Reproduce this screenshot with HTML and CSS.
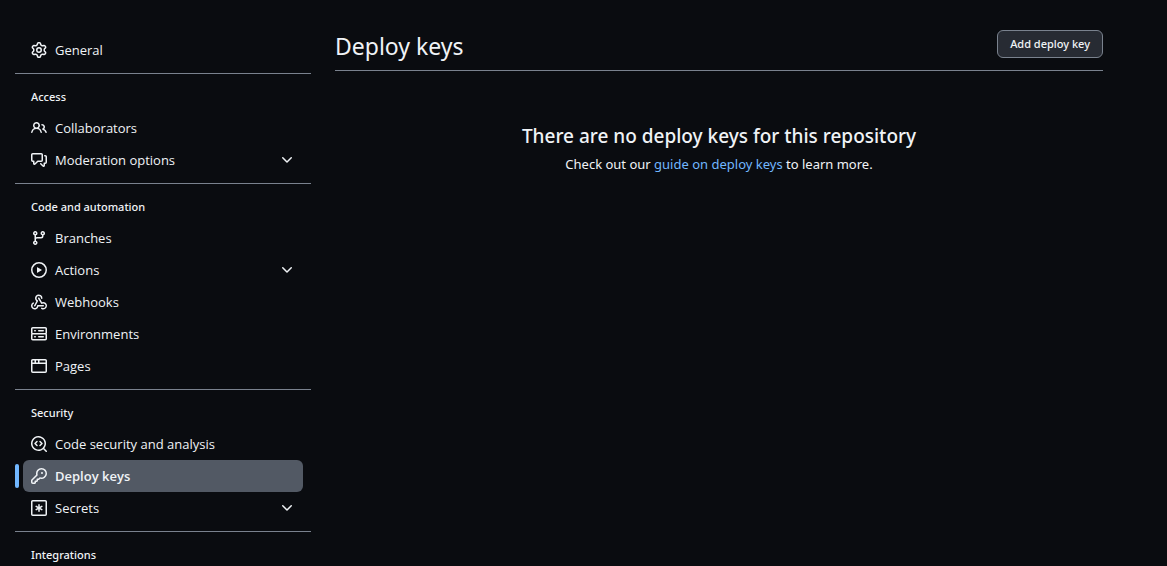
FILE: index.html
```html
<!DOCTYPE html>
<html lang="en">
<head>
    <meta charset="UTF-8">
    <meta name="viewport" content="width=device-width, initial-scale=1.0">
    <title>Deploy keys</title>
    <link rel="stylesheet" href="styles.css">
</head>
<body>

    <div class="layout">
        <nav class="sidebar" aria-label="Settings">
            <ul class="nav-group">
                <li>
                    <a class="nav-item" href="#general">
                        <svg class="icon" viewBox="0 0 16 16"><path d="M8 0a8.2 8.2 0 0 1 .701.031C9.444.095 9.99.645 10.16 1.29l.288 1.107c.018.066.079.158.212.224.231.114.454.243.668.386.123.082.233.09.299.071l1.103-.303c.644-.176 1.392.021 1.82.63.27.385.506.792.704 1.218.315.675.111 1.422-.364 1.891l-.814.806c-.049.048-.098.147-.088.294.016.257.016.515 0 .772-.01.147.038.246.088.294l.814.806c.475.469.679 1.216.364 1.891a7.977 7.977 0 0 1-.704 1.217c-.428.61-1.176.807-1.82.63l-1.102-.302c-.067-.019-.177-.011-.3.071a5.909 5.909 0 0 1-.668.386c-.133.066-.194.158-.211.224l-.29 1.106c-.168.646-.715 1.196-1.458 1.26a8.006 8.006 0 0 1-1.402 0c-.743-.064-1.289-.614-1.458-1.26l-.289-1.106c-.018-.066-.079-.158-.212-.224a5.738 5.738 0 0 1-.668-.386c-.123-.082-.233-.09-.299-.071l-1.103.303c-.644.176-1.392-.021-1.82-.63a8.12 8.12 0 0 1-.704-1.218c-.315-.675-.111-1.422.363-1.891l.815-.806c.05-.048.098-.147.088-.294a6.214 6.214 0 0 1 0-.772c.01-.147-.038-.246-.088-.294l-.815-.806C.635 6.045.431 5.298.746 4.623a7.92 7.92 0 0 1 .704-1.217c.428-.61 1.176-.807 1.82-.63l1.102.302c.067.019.177.011.3-.071.214-.143.437-.272.668-.386.133-.066.194-.158.211-.224l.29-1.106C6.009.645 6.556.095 7.299.03 7.53.01 7.764 0 8 0Zm-.571 1.525c-.036.003-.108.036-.137.146l-.289 1.105c-.147.561-.549.967-.998 1.189-.173.086-.34.183-.5.29-.417.278-.97.423-1.529.27l-1.103-.303c-.109-.03-.175.016-.195.045-.22.312-.412.644-.573.99-.014.031-.021.11.059.19l.815.806c.411.406.562.957.53 1.456a4.709 4.709 0 0 0 0 .582c.032.499-.119 1.05-.53 1.456l-.815.806c-.081.08-.073.159-.059.19.162.346.353.677.573.989.02.03.085.076.195.046l1.102-.303c.56-.153 1.113-.008 1.53.27.161.107.328.204.501.29.447.222.85.629.997 1.189l.289 1.105c.029.109.101.143.137.146a6.6 6.6 0 0 0 1.142 0c.036-.003.108-.036.137-.146l.289-1.105c.147-.561.549-.967.998-1.189.173-.086.34-.183.5-.29.417-.278.97-.423 1.529-.27l1.103.303c.109.029.175-.016.195-.045.22-.313.411-.644.573-.99.014-.031.021-.11-.059-.19l-.815-.806c-.411-.406-.562-.957-.53-1.456a4.709 4.709 0 0 0 0-.582c-.032-.499.119-1.05.53-1.456l.815-.806c.081-.08.073-.159.059-.19a6.464 6.464 0 0 0-.573-.989c-.02-.03-.085-.076-.195-.046l-1.102.303c-.56.153-1.113.008-1.53-.27a4.44 4.44 0 0 0-.501-.29c-.447-.222-.85-.629-.997-1.189l-.289-1.105c-.029-.11-.101-.143-.137-.146a6.6 6.6 0 0 0-1.142 0ZM11 8a3 3 0 1 1-6 0 3 3 0 0 1 6 0ZM9.5 8a1.5 1.5 0 1 0-3.001.001A1.5 1.5 0 0 0 9.5 8Z"/></svg>
                        General
                    </a>
                </li>
            </ul>

            <h2 class="nav-title">Access</h2>
            <ul class="nav-group">
                <li>
                    <a class="nav-item" href="#collaborators">
                        <svg class="icon" viewBox="0 0 16 16"><path d="M2 5.5a3.5 3.5 0 1 1 5.898 2.549 5.508 5.508 0 0 1 3.034 4.084.75.75 0 1 1-1.482.235 4 4 0 0 0-7.9 0 .75.75 0 0 1-1.482-.236A5.507 5.507 0 0 1 3.102 8.05 3.493 3.493 0 0 1 2 5.5ZM11 4a3.001 3.001 0 0 1 2.22 5.018 5.01 5.01 0 0 1 2.56 3.012.749.749 0 0 1-.885.954.752.752 0 0 1-.549-.514 3.507 3.507 0 0 0-2.522-2.372.75.75 0 0 1-.574-.73v-.352a.75.75 0 0 1 .416-.672A1.5 1.5 0 0 0 11 5.5.75.75 0 0 1 11 4Zm-5.5-.5a2 2 0 1 0-.001 3.999A2 2 0 0 0 5.5 3.5Z"/></svg>
                        Collaborators
                    </a>
                </li>
                <li>
                    <button class="nav-item" type="button" aria-expanded="false">
                        <svg class="icon" viewBox="0 0 16 16"><path d="M1.75 1h8.5c.966 0 1.75.784 1.75 1.75v5.5A1.75 1.75 0 0 1 10.25 10H7.061l-2.574 2.573A1.458 1.458 0 0 1 2 11.543V10h-.25A1.75 1.75 0 0 1 0 8.25v-5.5C0 1.784.784 1 1.75 1ZM1.5 2.75v5.5c0 .138.112.25.25.25h1a.75.75 0 0 1 .75.75v2.19l2.72-2.72a.749.749 0 0 1 .53-.22h3.5a.25.25 0 0 0 .25-.25v-5.5a.25.25 0 0 0-.25-.25h-8.5a.25.25 0 0 0-.25.25Zm13 2a.25.25 0 0 0-.25-.25h-.5a.75.75 0 0 1 0-1.5h.5c.966 0 1.75.784 1.75 1.75v5.5A1.75 1.75 0 0 1 14.25 12H14v1.543a1.458 1.458 0 0 1-2.487 1.03L9.22 12.28a.749.749 0 0 1 .326-1.275.749.749 0 0 1 .734.215l2.22 2.22v-2.19a.75.75 0 0 1 .75-.75h1a.25.25 0 0 0 .25-.25Z"/></svg>
                        Moderation options
                        <svg class="icon chevron" viewBox="0 0 16 16"><path d="M12.78 5.22a.749.749 0 0 1 0 1.06l-4.25 4.25a.749.749 0 0 1-1.06 0L3.22 6.28a.749.749 0 1 1 1.06-1.06L8 8.939l3.72-3.719a.749.749 0 0 1 1.06 0Z"/></svg>
                    </button>
                </li>
            </ul>

            <h2 class="nav-title">Code and automation</h2>
            <ul class="nav-group">
                <li>
                    <a class="nav-item" href="#branches">
                        <svg class="icon" viewBox="0 0 16 16"><path d="M9.5 3.25a2.25 2.25 0 1 1 3 2.122V6A2.5 2.5 0 0 1 10 8.5H6a1 1 0 0 0-1 1v1.128a2.251 2.251 0 1 1-1.5 0V5.372a2.25 2.25 0 1 1 1.5 0v1.836A2.493 2.493 0 0 1 6 7h4a1 1 0 0 0 1-1v-.628A2.25 2.25 0 0 1 9.5 3.25Zm-6 0a.75.75 0 1 0 1.5 0 .75.75 0 0 0-1.5 0Zm8.25-.75a.75.75 0 1 0 0 1.5.75.75 0 0 0 0-1.5ZM4.25 12a.75.75 0 1 0 0 1.5.75.75 0 0 0 0-1.5Z"/></svg>
                        Branches
                    </a>
                </li>
                <li>
                    <button class="nav-item" type="button" aria-expanded="false">
                        <svg class="icon" viewBox="0 0 16 16"><path d="M8 0a8 8 0 1 1 0 16A8 8 0 0 1 8 0ZM1.5 8a6.5 6.5 0 1 0 13 0 6.5 6.5 0 0 0-13 0Zm4.879-2.773 4.264 2.559a.25.25 0 0 1 0 .428l-4.264 2.559A.25.25 0 0 1 6 10.559V5.442a.25.25 0 0 1 .379-.215Z"/></svg>
                        Actions
                        <svg class="icon chevron" viewBox="0 0 16 16"><path d="M12.78 5.22a.749.749 0 0 1 0 1.06l-4.25 4.25a.749.749 0 0 1-1.06 0L3.22 6.28a.749.749 0 1 1 1.06-1.06L8 8.939l3.72-3.719a.749.749 0 0 1 1.06 0Z"/></svg>
                    </button>
                </li>
                <li>
                    <a class="nav-item" href="#webhooks">
                        <svg class="icon" viewBox="0 0 16 16"><path d="M5.5 4.25a2.25 2.25 0 0 1 4.5 0 .75.75 0 0 0 1.5 0 3.75 3.75 0 1 0-6.14 2.889l-2.272 4.258a.75.75 0 0 0 1.324.706L7 7.25a.75.75 0 0 0-.309-1.015A2.25 2.25 0 0 1 5.5 4.25Z"/><path d="M7.364 3.607a.75.75 0 0 1 1.03.257l2.608 4.349a3.75 3.75 0 1 1-.628 6.785.75.75 0 0 1 .752-1.299 2.25 2.25 0 1 0-.033-3.88.75.75 0 0 1-1.03-.256L7.107 4.636a.75.75 0 0 1 .257-1.029Z"/><path d="M2.9 8.776A.75.75 0 0 1 2.625 9.8 2.25 2.25 0 1 0 6 11.75a.75.75 0 0 1 .75-.751h5.5a.75.75 0 0 1 0 1.5H7.425a3.751 3.751 0 1 1-5.55-3.998.75.75 0 0 1 1.025.275Z"/></svg>
                        Webhooks
                    </a>
                </li>
                <li>
                    <a class="nav-item" href="#environments">
                        <svg class="icon" viewBox="0 0 16 16"><path d="M1.75 1h12.5c.966 0 1.75.784 1.75 1.75v4c0 .372-.116.717-.314 1 .198.283.314.628.314 1v4a1.75 1.75 0 0 1-1.75 1.75H1.75A1.75 1.75 0 0 1 0 12.75v-4c0-.358.109-.707.314-1a1.739 1.739 0 0 1-.314-1v-4C0 1.784.784 1 1.75 1ZM1.5 2.75v4c0 .138.112.25.25.25h12.5a.25.25 0 0 0 .25-.25v-4a.25.25 0 0 0-.25-.25H1.75a.25.25 0 0 0-.25.25Zm.25 5.75a.25.25 0 0 0-.25.25v4c0 .138.112.25.25.25h12.5a.25.25 0 0 0 .25-.25v-4a.25.25 0 0 0-.25-.25ZM7 4.75A.75.75 0 0 1 7.75 4h4.5a.75.75 0 0 1 0 1.5h-4.5A.75.75 0 0 1 7 4.75ZM7.75 10h4.5a.75.75 0 0 1 0 1.5h-4.5a.75.75 0 0 1 0-1.5ZM3 4.75A.75.75 0 0 1 3.75 4h.5a.75.75 0 0 1 0 1.5h-.5A.75.75 0 0 1 3 4.75ZM3.75 10h.5a.75.75 0 0 1 0 1.5h-.5a.75.75 0 0 1 0-1.5Z"/></svg>
                        Environments
                    </a>
                </li>
                <li>
                    <a class="nav-item" href="#pages">
                        <svg class="icon" viewBox="0 0 16 16"><path d="M0 2.75C0 1.784.784 1 1.75 1h12.5c.966 0 1.75.784 1.75 1.75v10.5A1.75 1.75 0 0 1 14.25 15H1.75A1.75 1.75 0 0 1 0 13.25ZM14.5 6h-13v7.25c0 .138.112.25.25.25h12.5a.25.25 0 0 0 .25-.25Zm-6-3.5v2h6V2.75a.25.25 0 0 0-.25-.25ZM5 2.5v2h2v-2Zm-3.25 0a.25.25 0 0 0-.25.25V4.5h2v-2Z"/></svg>
                        Pages
                    </a>
                </li>
            </ul>

            <h2 class="nav-title">Security</h2>
            <ul class="nav-group">
                <li>
                    <a class="nav-item" href="#analysis">
                        <svg class="icon" viewBox="0 0 16 16"><path d="M8.47 4.97a.75.75 0 0 0 0 1.06L9.94 7.5 8.47 8.97a.75.75 0 1 0 1.06 1.06l2-2a.75.75 0 0 0 0-1.06l-2-2a.75.75 0 0 0-1.06 0ZM6.53 6.03a.75.75 0 0 0-1.06-1.06l-2 2a.75.75 0 0 0 0 1.06l2 2a.75.75 0 1 0 1.06-1.06L5.06 7.5l1.47-1.47Z"/><path d="M12.246 13.307a7.5 7.5 0 1 1 1.06-1.06l2.474 2.473a.749.749 0 1 1-1.06 1.06ZM1.5 7.5a6.002 6.002 0 0 0 3.608 5.504 6.002 6.002 0 0 0 6.486-1.117.748.748 0 0 1 .292-.293A6 6 0 1 0 1.5 7.5Z"/></svg>
                        Code security and analysis
                    </a>
                </li>
                <li class="current">
                    <a class="nav-item" href="#keys" aria-current="page">
                        <svg class="icon" viewBox="0 0 16 16"><path d="M10.5 0a5.499 5.499 0 1 1-1.288 10.848l-.932.932a.749.749 0 0 1-.53.22H7v.75a.749.749 0 0 1-.22.53l-.5.5a.749.749 0 0 1-.53.22H5v.75a.749.749 0 0 1-.22.53l-.5.5a.749.749 0 0 1-.53.22h-2A1.75 1.75 0 0 1 0 14.25v-2c0-.199.079-.389.22-.53l4.932-4.932A5.5 5.5 0 0 1 10.5 0Zm-4 5.5c-.001.431.069.86.205 1.269a.75.75 0 0 1-.181.768L1.5 12.56v1.69c0 .138.112.25.25.25h1.69l.06-.06v-1.19a.75.75 0 0 1 .75-.75h1.19l.06-.06v-1.19a.75.75 0 0 1 .75-.75h1.19l1.023-1.025a.75.75 0 0 1 .768-.18A4 4 0 1 0 6.5 5.5ZM11 6a1 1 0 1 1 0-2 1 1 0 0 1 0 2Z"/></svg>
                        Deploy keys
                    </a>
                </li>
                <li>
                    <button class="nav-item" type="button" aria-expanded="false">
                        <svg class="icon" viewBox="0 0 16 16"><path d="M0 1.75C0 .784.784 0 1.75 0h12.5C15.216 0 16 .784 16 1.75v12.5A1.75 1.75 0 0 1 14.25 16H1.75A1.75 1.75 0 0 1 0 14.25Zm1.75-.25a.25.25 0 0 0-.25.25v12.5c0 .138.112.25.25.25h12.5a.25.25 0 0 0 .25-.25V1.75a.25.25 0 0 0-.25-.25ZM8 4a.75.75 0 0 1 .75.75V6.7l1.69-.975a.75.75 0 0 1 .75 1.3L9.5 8l1.69.976a.75.75 0 0 1-.75 1.298L8.75 9.3v1.951a.75.75 0 0 1-1.5 0V9.299l-1.69.976a.75.75 0 0 1-.75-1.3L6.5 8l-1.69-.975a.75.75 0 0 1 .75-1.3l1.69.976V4.75A.75.75 0 0 1 8 4Z"/></svg>
                        Secrets
                        <svg class="icon chevron" viewBox="0 0 16 16"><path d="M12.78 5.22a.749.749 0 0 1 0 1.06l-4.25 4.25a.749.749 0 0 1-1.06 0L3.22 6.28a.749.749 0 1 1 1.06-1.06L8 8.939l3.72-3.719a.749.749 0 0 1 1.06 0Z"/></svg>
                    </button>
                </li>
            </ul>

            <h2 class="nav-title">Integrations</h2>
        </nav>

        <main class="content">
            <header class="page-header">
                <h1>Deploy keys</h1>
                <button class="btn" type="button">Add deploy key</button>
            </header>

            <section class="blankslate">
                <h2>There are no deploy keys for this repository</h2>
                <p>Check out our <a href="#guide">guide on deploy keys</a> to learn more.</p>
            </section>
        </main>
    </div>

</body>
</html>
```
FILE: styles.css
```css
* {
    margin: 0;
    padding: 0;
    box-sizing: border-box;
}

body {
    font-family: "Noto Sans", "Open Sans", sans-serif;
    font-size: 13px;
    line-height: 20px;
    color: #f0f3f6;
    background-color: #0a0c10;
}

.layout {
    display: flex;
    gap: 24px;
    padding: 0 64px 0 15px;
}

/* Sidebar */
.sidebar {
    flex: 0 0 296px;
    padding-top: 34px;
}

.nav-group {
    list-style: none;
    padding: 0 8px;
    font-family: "Open Sans", "Noto Sans", sans-serif;
}

.nav-title {
    margin-top: 7px;
    padding: 14px 16px 6px;
    border-top: 1px solid #7a828e;
    font-size: 11px;
    font-weight: 500;
    line-height: 18px;
}

.nav-item {
    display: flex;
    align-items: center;
    gap: 8px;
    width: 100%;
    padding: 6px 8px;
    border: none;
    border-radius: 6px;
    background: none;
    color: inherit;
    font: inherit;
    text-align: left;
    text-decoration: none;
    cursor: pointer;
}

.nav-item:hover {
    background-color: #272b33;
}

.icon {
    flex: none;
    width: 16px;
    height: 16px;
    fill: currentColor;
}

.chevron {
    margin-left: auto;
}

.current {
    position: relative;
}

.current .nav-item {
    background-color: #525964;
    font-weight: 600;
}

/* Blue marker left of the current page */
.current::before {
    content: "";
    position: absolute;
    top: 4px;
    left: -8px;
    width: 4px;
    height: 24px;
    border-radius: 6px;
    background-color: #71b7ff;
}

/* Main column */
.content {
    flex: 1;
    min-width: 0;
    padding-top: 30px;
}

.page-header {
    display: flex;
    align-items: flex-start;
    justify-content: space-between;
    padding-bottom: 8px;
    border-bottom: 1px solid #7a828e;
}

.page-header h1 {
    font-size: 23px;
    font-weight: 400;
    line-height: 32px;
}

.btn {
    padding: 3px 12px;
    border: 1px solid #7a828e;
    border-radius: 6px;
    background-color: #272b33;
    color: inherit;
    font-family: inherit;
    font-size: 11px;
    font-weight: 500;
    line-height: 20px;
    cursor: pointer;
}

.blankslate {
    padding: 51px 32px;
    text-align: center;
}

.blankslate h2 {
    margin-bottom: 4px;
    font-size: 19px;
    font-weight: 500;
    line-height: 28px;
}

.blankslate a {
    color: #71b7ff;
    text-decoration: none;
}
```
